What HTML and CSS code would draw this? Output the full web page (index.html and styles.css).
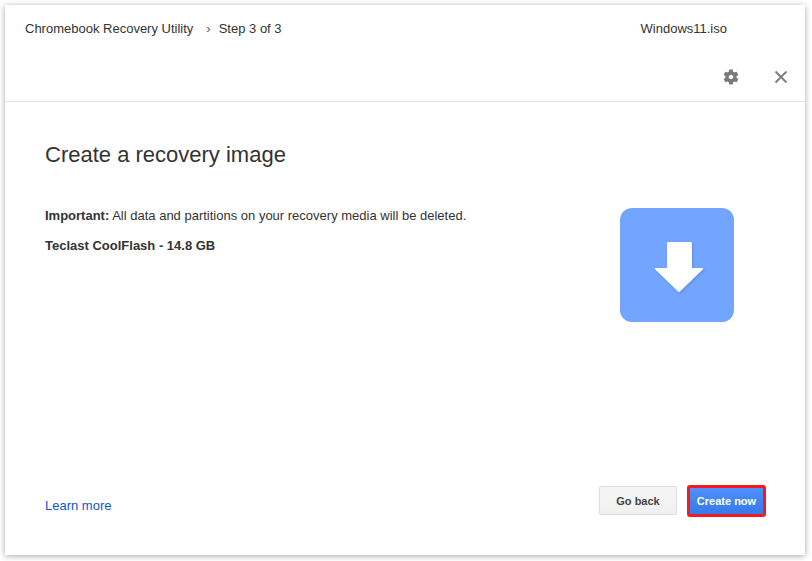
FILE: index.html
```html
<!DOCTYPE html>
<html lang="en">
<head>
<meta charset="utf-8">
<title>Chromebook Recovery Utility</title>
<link rel="stylesheet" href="styles.css">
</head>
<body>
<div class="window">
  <header class="header">
    <div class="top-row">
      <div class="crumbs">
        <span class="app-name">Chromebook Recovery Utility</span>
        <span class="chevron">›</span>
        <span>Step 3 of 3</span>
      </div>
      <div class="file-name">Windows11.iso</div>
    </div>
    <div class="tools">
      <svg class="gear" width="18" height="18" viewBox="0 0 24 24"><path fill="#7a7a7a" fill-rule="evenodd" d="M19.43 12.98c.04-.32.07-.64.07-.98s-.03-.66-.07-.98l2.11-1.65c.19-.15.24-.42.12-.64l-2-3.46c-.12-.22-.39-.3-.61-.22l-2.49 1c-.52-.4-1.08-.73-1.69-.98l-.38-2.65C14.46 2.18 14.25 2 14 2h-4c-.25 0-.46.18-.49.42l-.38 2.65c-.61.25-1.17.59-1.69.98l-2.49-1c-.23-.09-.49 0-.61.22l-2 3.46c-.13.22-.07.49.12.64l2.11 1.65c-.04.32-.07.65-.07.98s.03.66.07.98l-2.11 1.65c-.19.15-.24.42-.12.64l2 3.46c.12.22.39.3.61.22l2.49-1c.52.4 1.08.73 1.69.98l.38 2.65c.03.24.24.42.49.42h4c.25 0 .46-.18.49-.42l.38-2.65c.61-.25 1.17-.59 1.69-.98l2.49 1c.23.09.49 0 .61-.22l2-3.46c.12-.22.07-.49-.12-.64l-2.11-1.65zM12 15c-1.66 0-3-1.34-3-3s1.34-3 3-3 3 1.34 3 3-1.34 3-3 3z"/></svg>
      <svg class="close" width="14" height="14" viewBox="0 0 14 14"><path stroke="#7f7f7f" stroke-width="1.9" fill="none" d="M1.500 1.500l11 11M12.500 1.500l-11 11"/></svg>
    </div>
  </header>
  <main class="content">
    <div class="text-col">
      <h1 class="title">Create a recovery image</h1>
      <p class="warning"><b>Important:</b> All data and partitions on your recovery media will be deleted.</p>
      <p class="device">Teclast CoolFlash - 14.8 GB</p>
    </div>
    <div class="tile">
      <svg width="50" height="52" viewBox="0 0 50 52" class="arrow"><path fill="#fff" d="M13 2a1 1 0 0 1 1-1h23a1 1 0 0 1 1 1v25h10.500a.7.700 0 0 1 .5 1.200L26 50.500a1.500 1.500 0 0 1-2 0L1 28.200A.7.700 0 0 1 1.500 27H13z"/></svg>
    </div>
  </main>
  <footer class="footer">
    <a class="learn" href="#">Learn more</a>
    <div class="actions">
      <button class="btn back">Go back</button>
      <button class="btn create">Create now</button>
    </div>
  </footer>
</div>
</body>
</html>
```
FILE: styles.css
```css
* { box-sizing: border-box; }
html, body { margin: 0; height: 100%; overflow: hidden; background: #fff; }
body { padding: 5px 7px 6px 5px; font-family: "Liberation Sans", Arial, sans-serif; color: #222; }
.window {
  width: 800px;
  height: 550px;
  background: #fff;
  box-shadow: 0 1px 6px rgba(0, 0, 0, .35);
  display: flex;
  flex-direction: column;
}
.header {
  height: 97px;
  border-bottom: 1px solid #e3e3e3;
  display: flex;
  flex-direction: column;
}
.top-row {
  display: flex;
  justify-content: space-between;
  padding: 16px 78px 0 20px;
  font-size: 13px;
  line-height: 15px;
  color: #333;
}
.crumbs { display: flex; }
.chevron { margin: 0 8px 0 13px; color: #555; }
.tools {
  margin-top: 32px;
  padding-right: 17px;
  display: flex;
  justify-content: flex-end;
  align-items: center;
  height: 18px;
}
.gear { margin-right: 34px; }
.content {
  flex: 1;
  display: flex;
  justify-content: space-between;
  padding: 0 71px 0 40px;
}
.title {
  margin: 39px 0 0;
  font-weight: 400;
  font-size: 22px;
  line-height: 28px;
  color: #333;
}
.warning, .device { margin: 0; font-size: 13px; line-height: 16px; color: #333; }
.warning { margin-top: 39px; }
.device { margin-top: 14px; font-weight: 700; }
.tile {
  width: 114px;
  height: 114px;
  margin-top: 106px;
  padding: 4px 0 0 4px;
  border-radius: 12px;
  background: #72a5fd;
  display: flex;
  align-items: center;
  justify-content: center;
}
.arrow { filter: drop-shadow(1px 1px 1px rgba(40, 70, 140, .25)); }
.footer {
  display: flex;
  justify-content: space-between;
  align-items: center;
  padding: 0 39px 38px 40px;
}
.learn { color: #1155cc; font-size: 13px; text-decoration: none; margin-top: 8px; }
.actions { display: flex; gap: 10px; align-items: flex-start; }
.btn {
  font-family: inherit;
  font-size: 11px;
  font-weight: 700;
  border-radius: 2px;
  padding: 0;
}
.back {
  width: 78px;
  height: 29px;
  margin-top: 1px;
  background: linear-gradient(#f5f5f5, #f1f1f1);
  border: 1px solid #dcdcdc;
  color: #444;
}
.create {
  width: 79px;
  height: 32px;
  background: linear-gradient(#4d90fe, #357ae8);
  border: 3px solid #f81a1a;
  border-radius: 3px;
  color: #fff;
}
```
